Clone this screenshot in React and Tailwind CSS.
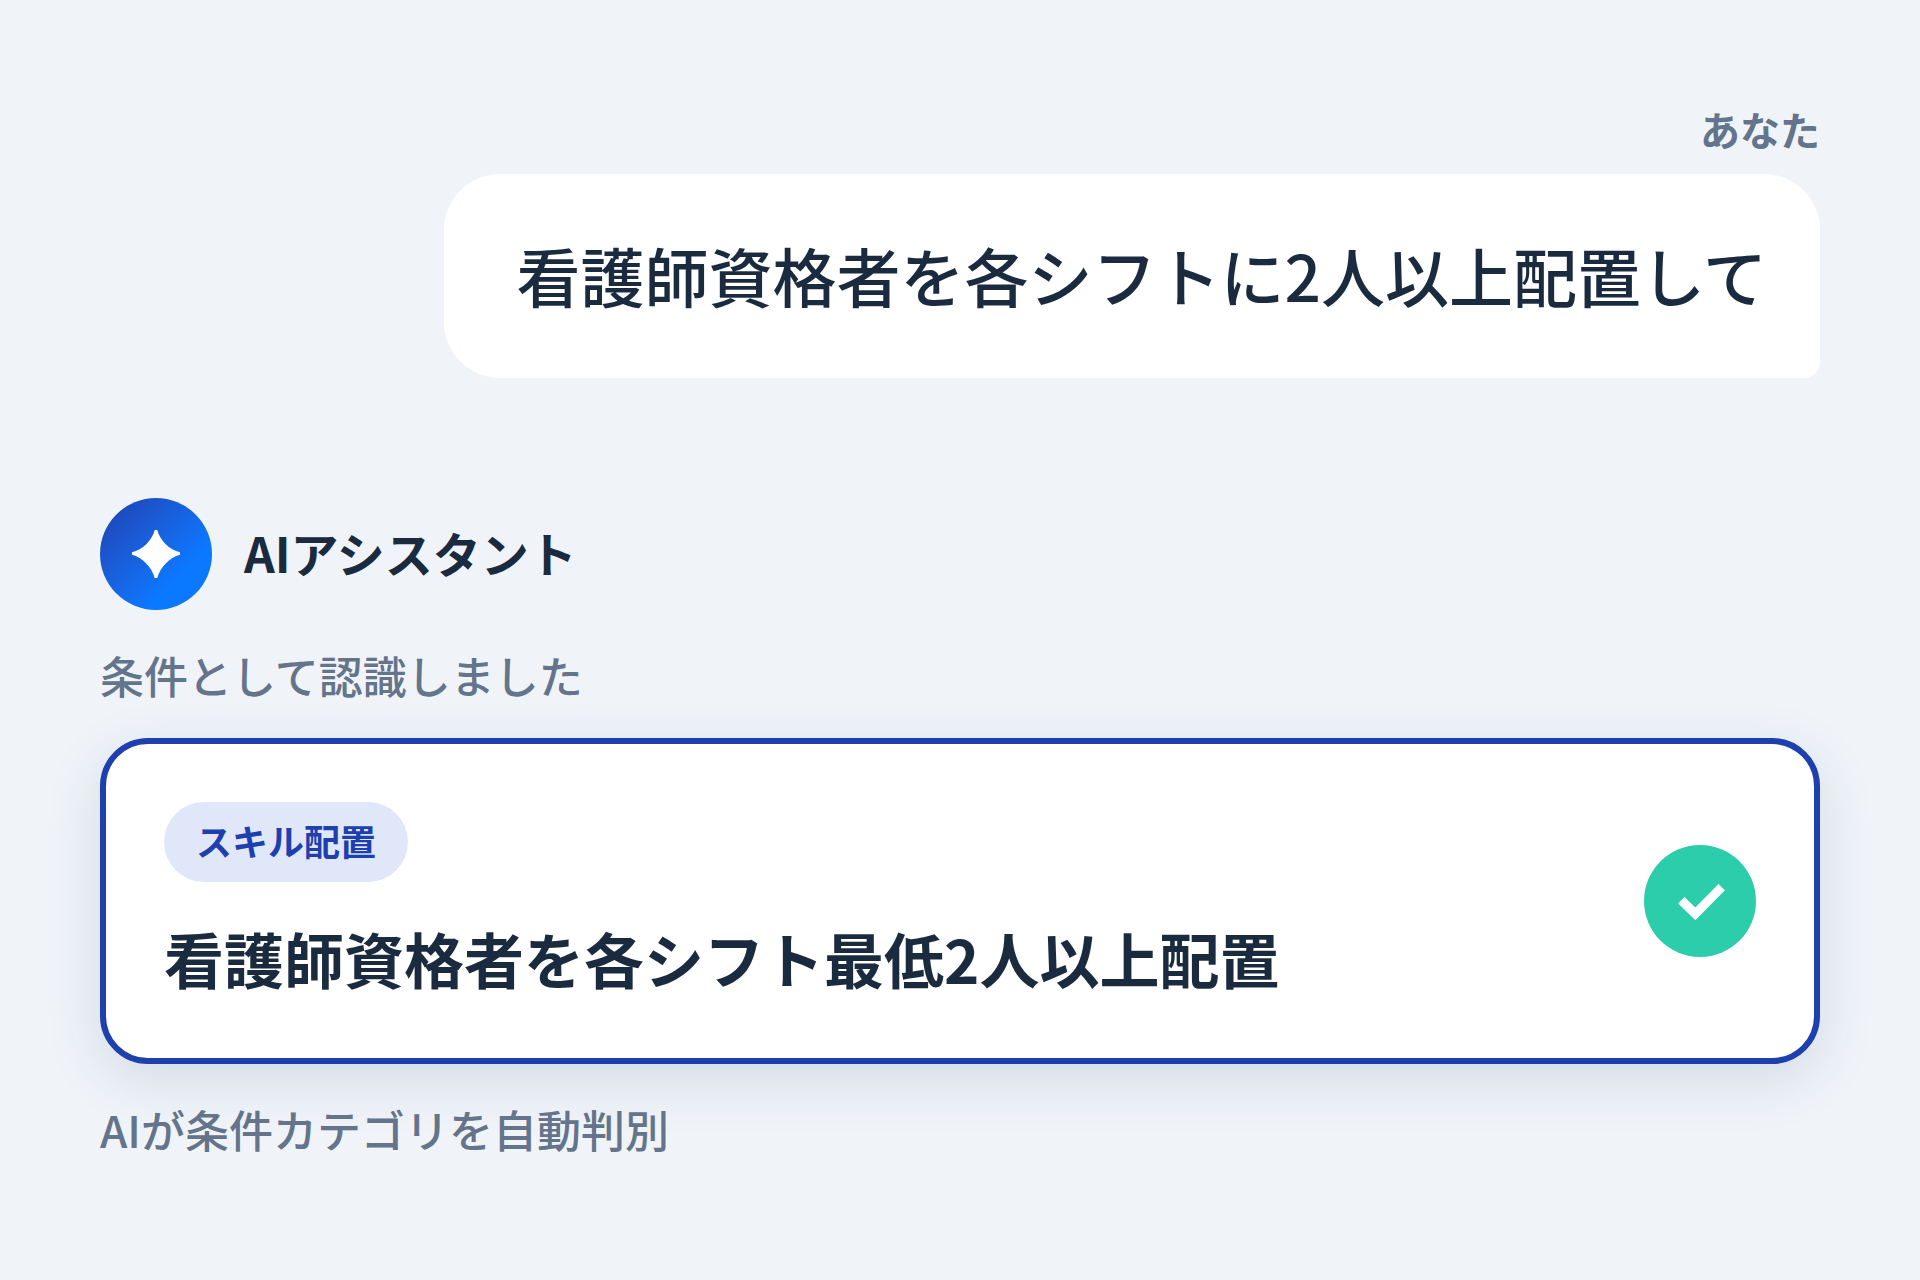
function SparkleIcon() {
  return (
    <svg viewBox="0 0 48 48" className="size-12 fill-white" aria-hidden="true">
      <path d="M22.7 0 H25.3 C28 10.5 37.5 20 48 22.3 V24.7 C37.5 27.5 28 37.5 25.3 48 H22.7 C20 37.5 10.5 27.5 0 24.7 V22.3 C10.5 20 20 10.5 22.7 0 Z" />
    </svg>
  );
}

function CheckIcon() {
  return (
    <svg viewBox="0 0 56 56" className="size-14" fill="none" stroke="white" aria-hidden="true">
      <path d="M9.3 27.2 L23.3 40.8 L49.7 14.2" strokeWidth="9" />
    </svg>
  );
}

export default function App() {
  return (
    <main
      lang="ja"
      className="min-h-screen bg-[#f0f4f9] px-[100px] py-24 font-['Noto_Sans_CJK_JP',sans-serif] text-[#1a2b3f]"
    >
      <section className="flex flex-col items-end gap-3">
        <p className="text-[40px] leading-[66px] font-bold text-[#64748b]">あなた</p>
        <p className="rounded-[56px] rounded-br-[16px] bg-white pt-[52px] pr-[53px] pb-[56px] pl-[72px] text-[64px] leading-[96px] font-medium">
          看護師資格者を各シフトに2人以上配置して
        </p>
      </section>

      <section className="mt-[120px]">
        <header className="flex items-center gap-8">
          <span className="flex size-28 items-center justify-center rounded-full bg-linear-135 from-[#1e40af] to-[#0a78ff] to-70%">
            <SparkleIcon />
          </span>
          <h1 className="pb-1 text-[48px] leading-[72px] font-bold">AIアシスタント</h1>
        </header>

        <p className="mt-8 text-[44px] leading-[66px] font-medium text-[#64748b]">条件として認識しました</p>

        <article className="mt-[30px] flex items-center justify-between rounded-[48px] border-6 border-[#1e40af] bg-white p-[58px] shadow-[0_16px_56px_rgba(20,55,95,0.13)]">
          <div className="flex flex-col items-start gap-[34px]">
            <span className="rounded-full bg-[#e0e7f9] px-8 pt-[10px] pb-[14px] text-[36px] leading-[56px] font-bold text-[#1e40af]">
              スキル配置
            </span>
            <h2 className="text-[60px] leading-[84px] font-bold">看護師資格者を各シフト最低2人以上配置</h2>
          </div>
          <span className="flex size-28 shrink-0 items-center justify-center rounded-full bg-[#2bcdaa]">
            <CheckIcon />
          </span>
        </article>

        <p className="mt-8 text-[44px] leading-[66px] font-medium text-[#64748b]">AIが条件カテゴリを自動判別</p>
      </section>
    </main>
  );
}
